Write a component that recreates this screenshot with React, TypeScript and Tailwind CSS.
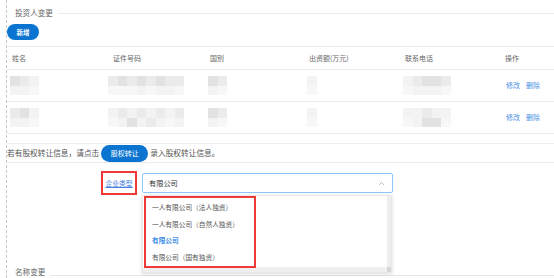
import React from "react";

const F = "font-['Noto_Sans_CJK_SC','Noto_Sans',sans-serif]";

function Mosaic({ cols, rows }: { cols: string[][]; rows?: number }) {
  // cols: array of columns, each column an array of colours (top to bottom)
  return (
    <div className="flex">
      {cols.map((c, i) => (
        <div key={i} className="flex flex-col">
          {c.map((col, j) => (
            <div key={j} className="w-[9.5px] h-[9.5px]" style={{ background: col }} />
          ))}
        </div>
      ))}
    </div>
  );
}

const A = "#e2e2e2";
const B = "#ebebeb";
const C = "#f3f3f3";
const D = "#f7f7f7";

function Row({ variant }: { variant: number }) {
  const c1 = variant === 0 ? [[A, C], [B, C], [C, D]] : [[B, C], [A, C], [C, D]];
  const c2 =
    variant === 0
      ? [[B, D], [A, D], [B, D], [A, C], [B, D], [A, C], [B, C], [B, D]]
      : [[C, D], [B, C], [C, A], [B, C], [C, B], [B, C], [C, D], [B, C]];
  const c3 = [[A, C], [B, D]];
  const c5 =
    variant === 0 ? [[C, D], [B, C], [A, C], [A, C], [B, D]] : [[C, D], [C, C], [B, A], [C, A], [C, D]];
  return (
    <div className="grid grid-cols-[101px_97px_99px_96px_100px_1fr] h-[32px] border-b border-[#ececec] items-center pl-[3px]">
      <div className="blur-[0.6px]"><Mosaic cols={c1} /></div>
      <div className="blur-[0.6px] -ml-[3px]"><Mosaic cols={c2} /></div>
      <div className="blur-[0.6px]"><Mosaic cols={c3} /></div>
      <div className="blur-[0.6px]"><Mosaic cols={[[C, D]]} /></div>
      <div className="blur-[0.6px]"><Mosaic cols={c5} /></div>
      <div className="flex gap-[6px] text-[7px] text-[#4a90e2] pl-[3px]">
        <span>修改</span>
        <span>删除</span>
      </div>
    </div>
  );
}

export default function App() {
  return (
    <div className={`relative w-[554px] h-[278px] overflow-hidden bg-white ${F} text-[#555]`}>
      <div className="ml-[6px] h-[278px] border-l border-dashed border-[#c8c8c8] flex flex-col">
        {/* legend */}
        <div className="mt-[4px] h-[18px] flex items-center">
          <span className="ml-[8px] text-[7.6px] text-[#666] leading-none">投资人变更</span>
          <div className="flex-1 h-px bg-[#ececec] ml-[5px]" />
        </div>
        <div className="mt-[2px] h-[16px] flex">
          <button className="w-[32px] h-[16px] rounded-full bg-[#0b74d0] text-white text-[6.5px] font-bold leading-none flex items-center justify-center">
            新增
          </button>
        </div>
        {/* table */}
        <div className="mt-[6px] border-t border-[#ececec]">
          <div className="grid grid-cols-[101px_97px_99px_96px_100px_1fr] h-[23px] border-b border-[#ececec] items-center pl-[5px] text-[7px] text-[#666]">
            <span>姓名</span>
            <span>证件号码</span>
            <span>国别</span>
            <span>出资额(万元)</span>
            <span>联系电话</span>
            <span>操作</span>
          </div>
          <Row variant={0} />
          <Row variant={1} />
        </div>
        <div className="h-[10px] border-b border-[#ececec]" />
        <div className="h-[19px] border-b border-[#ececec] flex items-center text-[7.7px] text-[#555] whitespace-nowrap">
          <span>若有股权转让信息，请点击</span>
          <button className="w-[47px] h-[17px] rounded-full bg-[#0b74d0] text-white text-[7px] leading-none flex items-center justify-center mx-[2px]">
            股权转让
          </button>
          <span>录入股权转让信息。</span>
        </div>
        {/* form row */}
        <div className="mt-[8px] flex items-center">
          <div className="ml-[94px] w-[36px] h-[24px] border-2 border-[#f03a3a] flex items-center justify-center">
            <span className="text-[6.8px] text-[#4a7fe0] underline leading-none">企业类型</span>
          </div>
          <div className="ml-[5px] w-[251px] h-[20px] border border-[#8fc6fa] rounded-[2px] flex items-center px-[6px] justify-between">
            <span className="text-[7.2px] text-[#333]">有限公司</span>
            <svg width="7" height="5" viewBox="0 0 7 5" className="mr-[1px]">
              <path d="M1 4 L3.5 1.5 L6 4" fill="none" stroke="#b5b5b5" strokeWidth="0.9" />
            </svg>
          </div>
        </div>
        <div className="mt-auto mb-[1px] h-[10px] flex items-center">
          <span className="ml-[8px] text-[7.6px] text-[#666] leading-none">名称变更</span>
          <div className="flex-1 h-px bg-[#e6e6e6] ml-[5px] mt-[6px]" />
        </div>
      </div>

      {/* dropdown overlay */}
      <div className="absolute left-[142px] top-[195px] w-[250px] h-[78px] bg-white shadow-[0_1px_4px_rgba(0,0,0,0.15)] border border-[#e8e8e8]">
        <div className="absolute right-0 top-0 w-[4px] h-full bg-[#ededed]" />
        <div className="absolute left-0 bottom-0 w-full h-[5px] bg-[#efefef]" />
        <div className="absolute right-0 bottom-0 w-[4px] h-[5px] bg-[#d6d6d6]" />
        <div className="flex flex-col pt-[3px] pl-[9px] text-[6.7px] text-[#555]">
          <div className="h-[16.5px] flex items-center">一人有限公司（法人独资）</div>
          <div className="h-[16.5px] flex items-center">一人有限公司（自然人独资）</div>
          <div className="h-[16.5px] flex items-center text-[#3f8fe8] font-bold">有限公司</div>
          <div className="h-[16.5px] flex items-center">有限公司（国有独资）</div>
        </div>
      </div>
      <div className="absolute left-[144px] top-[196px] w-[112px] h-[72px] border-2 border-[#f03a3a]" />
    </div>
  );
}
